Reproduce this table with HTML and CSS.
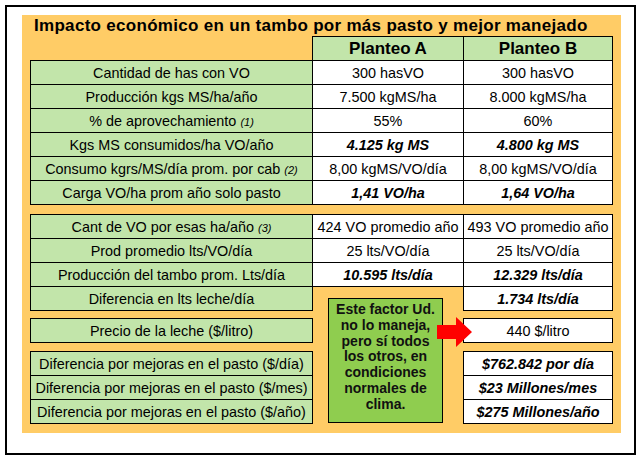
FILE: index.html
```html
<!DOCTYPE html>
<html lang="es">
<head>
<meta charset="utf-8">
<title>Impacto económico en un tambo</title>
<link rel="stylesheet" href="styles.css">
</head>
<body>
<div class="frame">
  <div class="sheet">
    <div class="title">Impacto económico en un tambo por más pasto y mejor manejado</div>

    <table class="grid">
      <colgroup><col class="c-label"><col class="c-a"><col class="c-b"></colgroup>
      <tr class="head"><td class="blank"></td><td class="hd">Planteo A</td><td class="hd">Planteo B</td></tr>
      <tr><td class="lbl">Cantidad de has con VO</td><td class="val">300 hasVO</td><td class="val">300 hasVO</td></tr>
      <tr><td class="lbl">Producción kgs MS/ha/año</td><td class="val">7.500 kgMS/ha</td><td class="val">8.000 kgMS/ha</td></tr>
      <tr><td class="lbl">% de aprovechamiento <i class="fn">(1)</i></td><td class="val">55%</td><td class="val">60%</td></tr>
      <tr><td class="lbl">Kgs MS consumidos/ha VO/año</td><td class="val em">4.125 kg MS</td><td class="val em">4.800 kg MS</td></tr>
      <tr><td class="lbl">Consumo kgrs/MS/día prom. por cab <i class="fn">(2)</i></td><td class="val">8,00 kgMS/VO/día</td><td class="val">8,00 kgMS/VO/día</td></tr>
      <tr><td class="lbl">Carga VO/ha prom año solo pasto</td><td class="val em">1,41 VO/ha</td><td class="val em">1,64 VO/ha</td></tr>
    </table>

    <table class="grid gap-2">
      <colgroup><col class="c-label"><col class="c-a"><col class="c-b"></colgroup>
      <tr><td class="lbl">Cant de VO por esas ha/año <i class="fn">(3)</i></td><td class="val">424 VO promedio año</td><td class="val">493 VO promedio año</td></tr>
      <tr><td class="lbl">Prod promedio lts/VO/día</td><td class="val">25 lts/VO/día</td><td class="val">25 lts/VO/día</td></tr>
      <tr><td class="lbl">Producción del tambo prom. Lts/día</td><td class="val em">10.595 lts/día</td><td class="val em">12.329 lts/día</td></tr>
      <tr><td class="lbl">Diferencia en lts leche/día</td><td class="blank"></td><td class="val em">1.734 lts/día</td></tr>
    </table>

    <table class="grid gap-3">
      <colgroup><col class="c-label"><col class="c-a"><col class="c-b"></colgroup>
      <tr><td class="lbl">Precio de la leche ($/litro)</td><td class="blank"></td><td class="val">440 $/litro</td></tr>
    </table>

    <table class="grid gap-4">
      <colgroup><col class="c-label"><col class="c-a"><col class="c-b"></colgroup>
      <tr><td class="lbl">Diferencia por mejoras en el pasto ($/día)</td><td class="blank"></td><td class="val em">$762.842 por día</td></tr>
      <tr><td class="lbl">Diferencia por mejoras en el pasto ($/mes)</td><td class="blank"></td><td class="val em">$23 Millones/mes</td></tr>
      <tr><td class="lbl">Diferencia por mejoras en el pasto ($/año)</td><td class="blank"></td><td class="val em">$275 Millones/año</td></tr>
    </table>

    <div class="note">Este factor Ud.<br>no lo maneja,<br>pero sí todos<br>los otros, en<br>condiciones<br>normales de<br>clima.</div>
    <svg class="arrow" width="36" height="30" viewBox="0 0 36 30" aria-hidden="true">
      <polygon points="0,8 19,8 19,0 35,15 19,30 19,22 0,22" fill="#ff0000"/>
    </svg>
  </div>
</div>
</body>
</html>
```

FILE: styles.css
```css
html, body {
  margin: 0;
  padding: 0;
  background: #ffffff;
}

body {
  font-family: "Liberation Sans", Arial, sans-serif;
  color: #000;
}

.frame {
  margin: 5px 0 0 5px;
  width: 631px;
  height: 450px;
  box-sizing: border-box;
  border: 2px solid #000;
  padding: 8px 13px 20px 15px;
  background: #fff;
}

.sheet {
  position: relative;
  height: 418px;
  background: #ffcc66;
  padding: 0 9px 0 8px;
}

.title {
  height: 21px;
  line-height: 21px;
  padding-left: 4px;
  font-size: 17px;
  font-weight: bold;
  letter-spacing: 0.3px;
  white-space: nowrap;
}

.grid {
  border-collapse: collapse;
  table-layout: fixed;
  width: 582px;
}

.gap-2 { margin-top: 9px; }
.gap-3 { margin-top: 7px; }
.gap-4 { margin-top: 8px; }

.c-label { width: 282px; }
.c-a { width: 151px; }
.c-b { width: 149px; }

.grid td {
  height: 23px;
  padding: 0;
  text-align: center;
  vertical-align: middle;
  font-size: 14.4px;
  white-space: nowrap;
  border: 1px solid #000;
}

.grid td.blank {
  border: none;
  background: transparent;
}

.lbl {
  background: #c2e5aa;
}

.grid td.hd {
  background: #c2e5aa;
  font-weight: bold;
  font-size: 17px;
}

.val {
  background: #fff;
}

.em {
  font-weight: bold;
  font-style: italic;
}

.fn {
  font-size: 11px;
}

.note {
  position: absolute;
  left: 306px;
  top: 283px;
  width: 115px;
  height: 125px;
  box-sizing: border-box;
  border: 1px solid #000;
  background: #8fcd4f;
  padding-top: 3px;
  text-align: center;
  font-size: 14px;
  font-weight: bold;
  line-height: 15.8px;
  color: #111;
}

.arrow {
  position: absolute;
  left: 415px;
  top: 302px;
}
```
